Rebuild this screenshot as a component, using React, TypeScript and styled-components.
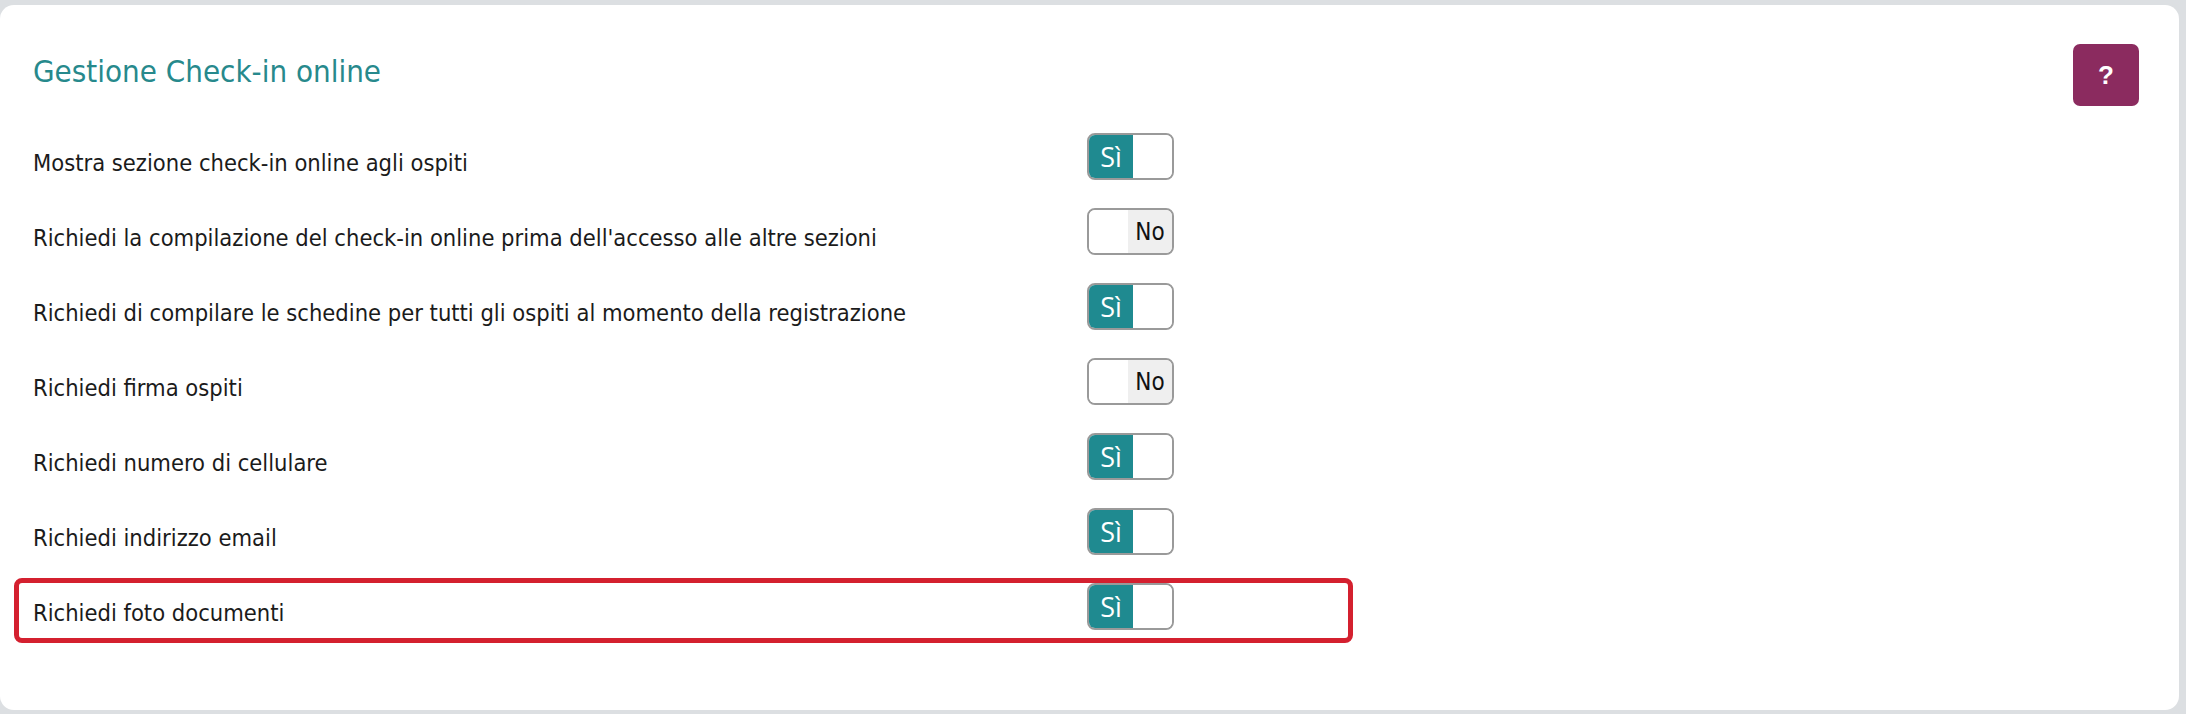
import React from 'react';
import styled, { createGlobalStyle } from 'styled-components';

const GlobalStyle = createGlobalStyle`
  html, body {
    margin: 0;
    padding: 0;
    background: #dcdfe2;
  }
  body {
    font-family: "DejaVu Sans Condensed", "DejaVu Sans", sans-serif;
    font-stretch: condensed;
  }
`;

const options = [
  { label: 'Mostra sezione check-in online agli ospiti', on: true },
  { label: "Richiedi la compilazione del check-in online prima dell'accesso alle altre sezioni", on: false },
  { label: 'Richiedi di compilare le schedine per tutti gli ospiti al momento della registrazione', on: true },
  { label: 'Richiedi firma ospiti', on: false },
  { label: 'Richiedi numero di cellulare', on: true },
  { label: 'Richiedi indirizzo email', on: true },
  { label: 'Richiedi foto documenti', on: true, highlight: true },
];

export default function App() {
  return (
    <>
      <GlobalStyle />
      <Page>
        <Card>
          <Header>
            <Title>Gestione Check-in online</Title>
            <HelpButton type="button">?</HelpButton>
          </Header>
          <List>
            {options.map((o) => (
              <Row key={o.label} $highlight={!!o.highlight}>
                <Label>{o.label}</Label>
                <Toggle>
                  {o.on ? (
                    <>
                      <OnPart>Sì</OnPart>
                      <Blank />
                    </>
                  ) : (
                    <>
                      <Blank />
                      <OffPart>No</OffPart>
                    </>
                  )}
                </Toggle>
              </Row>
            ))}
          </List>
        </Card>
      </Page>
    </>
  );
}

const Page = styled.div`
  padding: 5px 7px 4px 0;
  height: 714px;
  box-sizing: border-box;
`;

const Card = styled.div`
  height: 100%;
  box-sizing: border-box;
  background: #fff;
  border-radius: 14px;
  padding: 39px 40px 0 19px;
`;

const Header = styled.div`
  display: flex;
  justify-content: space-between;
  align-items: flex-start;
  height: 89px;
`;

const Title = styled.h2`
  margin: 8px 0 0 14px;
  font-size: 31px;
  font-weight: normal;
  line-height: 38px;
  color: #27898c;
`;

const HelpButton = styled.button`
  width: 66px;
  height: 62px;
  border: none;
  border-radius: 7px;
  background: #8b2b5f;
  color: #fff;
  font-family: "Liberation Sans", Arial, sans-serif;
  font-weight: bold;
  font-size: 26px;
  padding: 0;
`;

const List = styled.div`
  display: flex;
  flex-direction: column;
  gap: 20px;
`;

const Row = styled.div<{ $highlight: boolean }>`
  width: 1329px;
  height: 55px;
  box-sizing: border-box;
  padding-left: 14px;
  display: grid;
  grid-template-columns: 1054px 87px;
  align-items: center;
  outline: ${(p) => (p.$highlight ? '5px solid #d4202f' : 'none')};
  border-radius: 3px;
`;

const Label = styled.span`
  margin-top: 4px;
  font-size: 23.5px;
  color: #1b1b1b;
  white-space: nowrap;
`;

const Toggle = styled.div`
  align-self: start;
  display: flex;
  width: 87px;
  height: 47px;
  box-sizing: border-box;
  border: 2px solid #9a9a9a;
  border-radius: 8px;
  overflow: hidden;
  font-family: "Open Sans", "Noto Sans", sans-serif;
  font-stretch: normal;
  font-size: 27px;
`;

const OnPart = styled.div`
  width: 44px;
  background: #1f8a90;
  color: #fff;
  display: flex;
  align-items: center;
  justify-content: center;
`;

const OffPart = styled.div`
  width: 44px;
  background: #efefef;
  color: #111;
  display: flex;
  align-items: center;
  justify-content: center;
  font-family: "DejaVu Sans Condensed", "DejaVu Sans", sans-serif;
  font-stretch: condensed;
  font-size: 24px;
`;

const Blank = styled.div`
  flex: 1;
  background: #fff;
`;
